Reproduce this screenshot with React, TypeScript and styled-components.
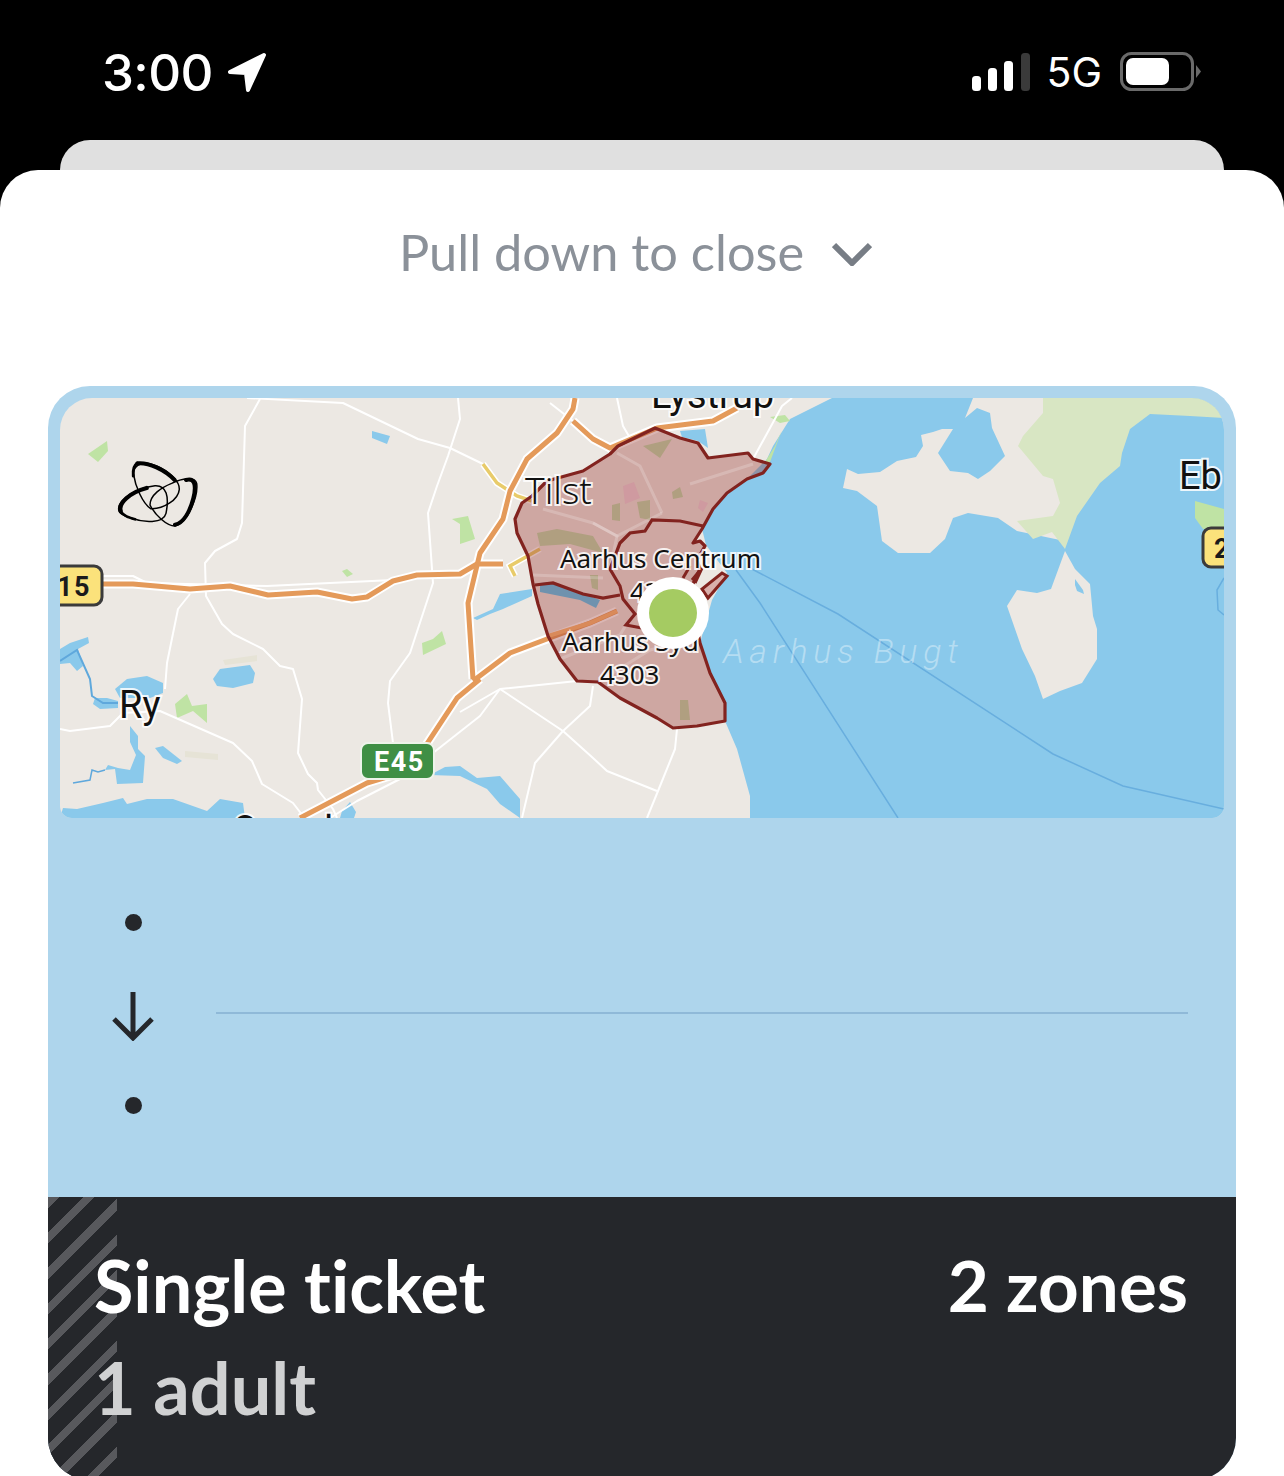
import React from "react";
import styled, { createGlobalStyle } from "styled-components";

const Global = createGlobalStyle`
  html, body { margin: 0; padding: 0; background: #000; }
`;

const UI_FONT = `Lato, "Noto Sans", sans-serif`;

const Page = styled.div`
  width: 1284px;
  height: 1476px;
  overflow: hidden;
  background: #000;
  display: flex;
  flex-direction: column;
`;

const StatusBar = styled.div`
  height: 140px;
  flex: none;
  box-sizing: border-box;
  padding: 0 82px 0 102px;
  display: flex;
  justify-content: space-between;
  align-items: flex-start;
  color: #fff;
  font-family: Inter, "Liberation Sans", sans-serif;
`;

const StatusGroup = styled.div`
  display: flex;
  align-items: center;
  height: 40px;
  margin-top: 52px;
`;

const Clock = styled.span`
  font-size: 51px;
  font-weight: 500;
  letter-spacing: -0.6px;
  margin-right: 14px;
`;

const Network = styled.span`
  font-size: 41px;
  font-weight: 400;
  margin: 0 18px 0 16px;
`;

const BackCard = styled.div`
  height: 30px;
  flex: none;
  margin: 0 60px;
  background: #e0e0e0;
  border-radius: 32px 32px 0 0;
`;

const Sheet = styled.div`
  flex: 1;
  background: #fff;
  border-radius: 38px 38px 0 0;
  padding: 0 48px;
  display: flex;
  flex-direction: column;
`;

const PullHint = styled.div`
  height: 216px;
  flex: none;
  box-sizing: border-box;
  padding: 50px 0 0 351px;
  display: flex;
  align-items: flex-start;
  gap: 28px;
  font-family: ${UI_FONT};
  font-size: 50.5px;
  line-height: 64px;
  color: #8b9199;
`;

const Chevron = styled.svg`
  margin-top: 22px;
`;

const TicketCard = styled.div`
  height: 1094px;
  flex: none;
  border-radius: 42px;
  overflow: hidden;
  background: #aed5ec;
  display: flex;
  flex-direction: column;
`;

const MapFrame = styled.div`
  margin: 12px 12px 0;
  height: 420px;
  flex: none;
  border-radius: 32px 32px 12px 12px;
  overflow: hidden;
  svg { display: block; }
`;

const TripPanel = styled.div`
  height: 379px;
  flex: none;
  box-sizing: border-box;
  padding: 0 48px 0 57px;
  display: flex;
  align-items: center;
  gap: 55px;
`;

const Stops = styled.div`
  width: 56px;
  flex: none;
  display: flex;
  flex-direction: column;
  align-items: center;
  padding-top: 12px;
`;

const Dot = styled.span`
  width: 17px;
  height: 17px;
  border-radius: 50%;
  background: #25272b;
`;

const ArrowIcon = styled.svg`
  margin: 60px 0 56px;
`;

const Divider = styled.div`
  flex: 1;
  height: 2px;
  background: #8fb9d8;
  margin-top: 11px;
`;

const Footer = styled.div`
  position: relative;
  flex: 1;
  background: #25272b;
  padding: 37px 48px 0 46px;
  display: grid;
  grid-template-columns: 1fr auto;
  grid-auto-rows: 102px;
  font-family: ${UI_FONT};
  font-size: 72px;
  line-height: 102px;
  font-weight: 700;
  font-variant-ligatures: none;
`;

const Stripes = styled.div`
  position: absolute;
  left: 0;
  top: 0;
  bottom: 0;
  width: 69px;
  background: repeating-linear-gradient(
    135deg,
    #58595d 0 8px,
    #25272b 8px 25px
  );
`;

const FooterText = styled.span<{ $muted?: boolean }>`
  position: relative;
  color: ${(p) => (p.$muted ? "#d0d1d2" : "#fff")};
`;

const ZoneCount = styled(FooterText)`
  font-size: 71px;
`;

const MapLabel = styled.text<{ $size?: number; $family?: string }>`
  font-family: ${(p) => p.$family || "Roboto"}, sans-serif;
  font-size: ${(p) => p.$size || 38}px;
  fill: #111;
  stroke: rgba(255, 255, 255, 0.85);
  stroke-width: 4px;
  paint-order: stroke;
`;

const ShieldText = styled.text<{ $light?: boolean }>`
  font-family: Roboto, sans-serif;
  font-size: 27px;
  font-weight: 700;
  letter-spacing: 1.5px;
  fill: ${(p) => (p.$light ? "#fff" : "#1b1b1b")};
`;

const BayLabel = styled.text`
  font-family: Roboto, sans-serif;
  font-size: 34px;
  font-style: italic;
  font-weight: 300;
  letter-spacing: 5.7px;
  fill: rgba(255, 255, 255, 0.38);
`;

const SEA = "#8ac9eb";
const LAND = "#ece8e3";
const GREEN = "#bfe3a4";
const ZONE_GREEN = "#b09f80";
const ZONE_LINE = "#82231f";

const lakes = [
  "372,431 390,436 387,444 372,438",
  "213,679 220,669 250,665 255,673 253,683 233,688 217,686",
  "115,689 127,679 147,676 163,683 163,693 150,698 120,698",
  "60,649 70,643 88,637 89,643 78,649 83,666 77,671 70,663 60,664",
  "95,698 107,698 118,701 118,708 100,709 93,704",
  "130,726 138,736 138,749 145,756 143,783 117,784 115,769 105,770 108,765 118,768 130,770 136,755 130,742",
  "155,748 163,746 182,761 177,764 163,758",
  "60,818 63,808 77,809 103,803 123,798 127,804 147,799 173,799 207,811 220,799 243,803 245,818",
  "460,766 477,778 500,776 520,799 520,818 500,804 487,789 460,776 430,775 445,767",
  "473,618 493,609 500,594 532,589 532,596 503,609 490,614 477,620",
  "680,431 705,429 708,448 698,441 682,437",
  "342,811 350,802 356,812 354,818 340,818",
];

const greens = [
  "88,454 107,441 108,451 98,462",
  "452,519 468,516 475,539 460,544 460,524",
  "342,571 347,569 353,574 347,577",
  "422,643 433,639 442,631 446,644 423,655",
  "175,704 187,694 192,706 207,704 207,723 193,711 177,718",
  "1195,501 1224,509 1224,528 1203,529 1195,518",
  "770,417 785,415 790,421 780,423",
  "775,446 782,430 770,462 765,462",
];

const whiteRoads = [
  "260,399 245,426 242,523 237,539 215,551 205,563 206,596 222,624 233,634 263,649 280,666 293,669 302,699 298,753 308,774 317,783 318,790 333,809 337,818",
  "247,398 343,403 418,439 450,448 483,464",
  "458,398 460,419 448,456 437,486 428,513 433,583 410,653 390,681 388,703 393,743",
  "103,576 133,576 147,583 267,586 393,580",
  "190,594 178,609 167,663 165,689",
  "60,729 70,731 110,726 123,713 160,711 233,743 252,761 262,784 293,803 303,816",
  "433,753 480,716 500,689",
  "400,779 357,801 330,818",
  "500,689 563,731 593,758 607,771 657,791",
  "593,686 590,706 563,731 535,763 522,818",
  "677,729 675,749 658,791 647,818",
  "577,681 500,689 460,712",
  "550,403 573,421",
  "617,398 623,426 630,438",
  "753,459 782,406 792,398",
];

const zoneRoads = [
  "617,453 640,466 662,513",
  "690,484 753,464",
  "662,513 617,536 593,523 543,509",
  "593,523 617,536 610,569 620,586",
  "533,575 603,578",
  "560,659 620,635 626,625",
  "598,682 650,650 690,640",
];

const orangeRoads = [
  "60,584 133,584 190,589 230,586 268,595 317,592 352,599 367,597 393,581 417,575 460,574 477,564 503,564",
  "575,398 573,409 557,433 527,459 510,491 503,519 480,553 468,603 473,679",
  "480,679 457,698 430,739 410,770 367,783 300,818",
  "473,681 510,653 547,639 590,623 617,611",
  "573,421 593,439 610,448 657,428 713,421 737,408",
];

const zoneOutline =
  "655,428 680,438 698,443 708,458 748,453 753,459 770,464 763,473 747,479 727,493 713,509 702,529 693,543 700,541 705,546 697,560 700,569 690,590 700,643 710,673 725,703 725,721 697,726 673,728 657,718 620,698 598,682 577,681 560,659 548,636 538,604 533,584 528,556 517,533 515,519 522,503 532,496 547,481 583,471 610,454 618,446";

const Logo = () => (
  <g transform="translate(100 450) scale(0.3333)" fill="none" stroke="#000" strokeLinecap="round">
    <path d="M100 70 C102 40 135 32 170 48 C205 62 240 95 238 118 C235 150 190 178 152 176 C128 160 106 110 100 70 Z" strokeWidth="4.5" />
    <path d="M112 40 C145 36 195 60 224 90" strokeWidth="12" />
    <path d="M100 78 C98 56 102 46 112 40" strokeWidth="9" />
    <path d="M150 165 C150 135 185 112 215 100 C245 85 285 78 290 100 C295 135 265 220 225 228 C200 228 165 195 150 165 Z" strokeWidth="4.5" />
    <path d="M258 90 C283 82 290 105 280 145 C270 185 250 220 225 224" strokeWidth="12" />
    <path d="M56 175 C58 148 105 115 165 107 C200 105 208 140 198 190 C190 222 130 218 95 205 C70 196 54 190 56 175 Z" strokeWidth="4.5" />
    <path d="M62 183 C54 160 90 127 140 114" strokeWidth="13" />
    <path d="M62 185 C72 198 85 202 105 208" strokeWidth="8" />
  </g>
);

const AreaMap = () => (
  <svg width="1164" height="420" viewBox="60 398 1164 420">
    <rect x="60" y="398" width="1164" height="420" fill={LAND} />
    {/* bay and coastline */}
    <polygon
      fill={SEA}
      points="832,398 790,419 773,446 767,459 747,479 727,493 713,509 702,529 706,545 727,573 712,600 700,643 710,673 725,703 725,721 737,749 750,796 750,818 1224,818 1224,398"
    />
    <polygon
      fill={LAND}
      points="973,398 965,418 977,408 990,413 992,428 1005,456 990,471 978,479 968,473 950,471 938,453 953,429 942,429 933,432 921,435 923,446 916,457 897,461 880,472 858,474 847,469 843,488 857,491 877,506 882,541 898,553 930,553 945,539 953,518 968,513 998,518 1017,531 1060,540 1080,500 1060,440 1050,398"
    />
    <polygon
      fill="#d8e6c3"
      points="1043,398 1224,398 1224,418 1190,416 1150,414 1130,429 1122,453 1120,466 1100,483 1077,516 1065,549 1052,532 1033,539 1017,521 1053,516 1060,503 1053,479 1043,476 1018,446 1023,436 1043,413"
    />
    <polygon
      fill={LAND}
      points="1065,551 1075,569 1090,584 1093,616 1097,629 1097,659 1082,683 1060,691 1043,699 1035,676 1022,649 1007,606 1017,590 1037,593 1051,589"
    />
    <polygon fill={SEA} points="1075,579 1083,590 1084,594 1077,591 1075,585" />
    <polyline fill="none" stroke="#68aede" strokeWidth="1.5" points="736,570 760,603 898,818" />
    <polyline fill="none" stroke="#68aede" strokeWidth="1.5" points="750,568 838,614 1053,754 1123,786 1224,809" />
    <polyline fill="none" stroke="#68aede" strokeWidth="1.5" points="1224,578 1217,590 1218,610 1224,615" />

    {/* land cover */}
    {greens.map((p) => (
      <polygon key={p} points={p} fill={GREEN} />
    ))}
    <polygon points="223,660 257,655 257,661 225,665" fill="#e6e3d6" />
    <polygon points="185,751 218,754 218,760 185,757" fill="#e6e3d6" />
    {lakes.map((p) => (
      <polygon key={p} points={p} fill={SEA} />
    ))}
    <polyline fill="none" stroke="#5fa8dc" strokeWidth="2" points="60,661 77,650 90,679 92,696 103,703 118,703" />
    <polyline fill="none" stroke="#5fa8dc" strokeWidth="1.5" points="73,783 90,780 92,770 98,772 105,770" />

    {/* roads */}
    {whiteRoads.map((p) => (
      <polyline key={p} points={p} fill="none" stroke="#fff" strokeWidth="2" strokeLinejoin="round" />
    ))}
    <polyline points="483,464 497,483 517,496 532,501" fill="none" stroke="#fff" strokeWidth="6.5" />
    <polyline points="483,464 497,483 517,496 532,501" fill="none" stroke="#e8cb6a" strokeWidth="3.5" />
    <polyline points="540,549 510,566 515,576" fill="none" stroke="#fff" strokeWidth="6.5" />
    <polyline points="540,549 510,566 515,576" fill="none" stroke="#e8cb6a" strokeWidth="3.5" />
    {orangeRoads.map((p) => (
      <polyline key={p} points={p} fill="none" stroke="#fff" strokeWidth="9" strokeLinejoin="round" />
    ))}
    {orangeRoads.map((p) => (
      <polyline key={p} points={p} fill="none" stroke="#e49a5a" strokeWidth="5" strokeLinejoin="round" />
    ))}

    {/* zones */}
    <polygon points={zoneOutline} fill="#983630" fillOpacity="0.36" />
    <polygon points="643,446 672,439 660,458" fill={ZONE_GREEN} />
    <polygon points="537,533 557,529 593,536 603,553 570,544 540,546" fill={ZONE_GREEN} />
    <polygon points="612,505 620,503 620,521 612,520" fill={ZONE_GREEN} />
    <polygon points="637,502 650,500 650,520 640,518" fill={ZONE_GREEN} />
    <polygon points="672,492 680,487 683,497 673,499" fill={ZONE_GREEN} />
    <polygon points="590,575 598,575 598,590 592,588" fill={ZONE_GREEN} />
    <polygon points="680,700 688,700 690,720 680,720" fill={ZONE_GREEN} />
    <polygon points="623,486 634,482 640,498 625,504" fill="#cf9aa0" />
    <polygon points="700,500 708,503 703,512 698,508" fill="#cf9aa0" />
    <polygon points="540,583 552,582 600,600 596,608 580,600 540,592" fill="#6f92ae" />
    {zoneRoads.map((p) => (
      <polyline key={p} points={p} fill="none" stroke="#fff" strokeOpacity="0.2" strokeWidth="3" />
    ))}
    <polyline points="548,636 590,623 617,611" fill="none" stroke="#d98a5a" strokeWidth="4" />
    <polygon points={zoneOutline} fill="none" stroke={ZONE_LINE} strokeWidth="3.2" strokeLinejoin="round" />
    <polyline
      points="703,526 680,521 652,520 645,531 630,533 620,543 610,569 620,586 623,599 635,614 626,625 647,629"
      fill="none"
      stroke={ZONE_LINE}
      strokeWidth="3.2"
    />
    <polyline points="535,585 553,583 583,594 603,598 620,595" fill="none" stroke={ZONE_LINE} strokeWidth="3.2" />
    <polygon points="727,576 722,573 702,589 708,598" fill="#d9b0ac" stroke={ZONE_LINE} strokeWidth="3" />
    <polyline points="683,578 690,566" fill="none" stroke={ZONE_LINE} strokeWidth="3" />
    <polyline points="692,580 702,568 695,583" fill="none" stroke={ZONE_LINE} strokeWidth="3" />

    <Logo />

    {/* shields */}
    <rect x="40" y="566" width="62" height="39" rx="8" fill="#fbe27b" stroke="#3b3b3b" strokeWidth="3" />
    <ShieldText x="57" y="596">15</ShieldText>
    <rect x="1203" y="528" width="50" height="39" rx="8" fill="#fbe27b" stroke="#3b3b3b" strokeWidth="3" />
    <ShieldText x="1214" y="558">2</ShieldText>
    <rect x="361" y="743" width="73" height="36" rx="7" fill="#3f8f45" stroke="#eef3ea" strokeWidth="2" />
    <ShieldText x="374" y="771" $light>E45</ShieldText>

    {/* labels */}
    <MapLabel x="651" y="408">Lystrup</MapLabel>
    <MapLabel x="525" y="504" $size={37} $family="Noto Sans" fontWeight="300">Tilst</MapLabel>
    <MapLabel x="1179" y="489">Eb</MapLabel>
    <MapLabel x="119" y="718">Ry</MapLabel>
    <MapLabel x="232" y="843">Ormslev</MapLabel>
    <MapLabel x="560" y="568" $size={26} $family="Noto Sans">Aarhus Centrum</MapLabel>
    <MapLabel x="630" y="601" $size={26} $family="Noto Sans">4302</MapLabel>
    <MapLabel x="562" y="651" $size={26} $family="Noto Sans">Aarhus Syd</MapLabel>
    <MapLabel x="600" y="684" $size={26} $family="Noto Sans">4303</MapLabel>
    <BayLabel x="723" y="663">Aarhus Bugt</BayLabel>

    {/* current position */}
    <circle cx="673" cy="613" r="36" fill="#fff" />
    <circle cx="673" cy="613" r="24" fill="#a5cb62" />
  </svg>
);

export default function App() {
  return (
    <Page>
      <Global />
      <StatusBar>
        <StatusGroup>
          <Clock>3:00</Clock>
          <svg width="40" height="40" viewBox="0 0 40 40">
            <polygon
              points="37,3 3,20 19,21 21,38"
              fill="#fff"
              stroke="#fff"
              strokeWidth="4"
              strokeLinejoin="round"
            />
          </svg>
        </StatusGroup>
        <StatusGroup>
          <svg width="58" height="38" viewBox="0 0 58 38">
            <rect x="0" y="23" width="9" height="15" rx="3.5" fill="#fff" />
            <rect x="16" y="15" width="9" height="23" rx="3.5" fill="#fff" />
            <rect x="32" y="8" width="9" height="30" rx="3.5" fill="#fff" />
            <rect x="49" y="0" width="9" height="38" rx="3.5" fill="#3a3a3a" />
          </svg>
          <Network>5G</Network>
          <svg width="82" height="40" viewBox="0 0 82 40">
            <rect x="1.5" y="1.5" width="71" height="36" rx="10" fill="none" stroke="#6a6a6a" strokeWidth="3" />
            <rect x="6" y="6" width="43" height="27" rx="7" fill="#fff" />
            <path d="M76 13 L81 19.5 L76 26 Z" fill="#6a6a6a" />
          </svg>
        </StatusGroup>
      </StatusBar>
      <BackCard />
      <Sheet>
        <PullHint>
          Pull down to close
          <Chevron width="40" height="24" viewBox="0 0 40 24">
            <polyline points="2,3 20,21 38,3" fill="none" stroke="#777d85" strokeWidth="6" />
          </Chevron>
        </PullHint>
        <TicketCard>
          <MapFrame>
            <AreaMap />
          </MapFrame>
          <TripPanel>
            <Stops>
              <Dot />
              <ArrowIcon width="44" height="50" viewBox="0 0 44 50">
                <path d="M22 1 V46 M3 28 L22 47 L41 28" fill="none" stroke="#25272b" strokeWidth="5" />
              </ArrowIcon>
              <Dot />
            </Stops>
            <Divider />
          </TripPanel>
          <Footer>
            <Stripes />
            <FooterText>Single ticket</FooterText>
            <ZoneCount>2 zones</ZoneCount>
            <FooterText $muted>1 adult</FooterText>
          </Footer>
        </TicketCard>
      </Sheet>
    </Page>
  );
}
